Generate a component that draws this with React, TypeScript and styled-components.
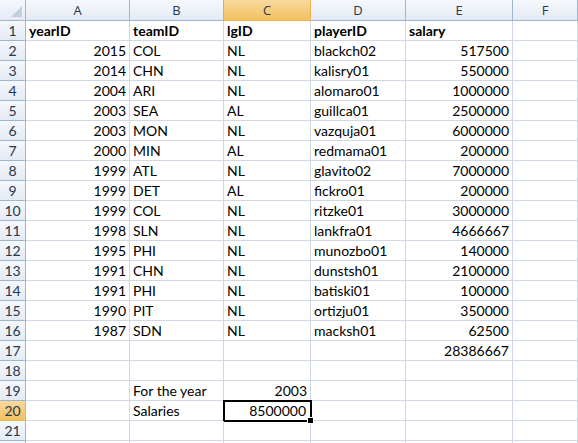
import React from "react";
import styled, { createGlobalStyle, css } from "styled-components";

const Global = createGlobalStyle`
  html, body { margin: 0; padding: 0; background: #fff; overflow: hidden; }
  body { font-family: Lato, "Open Sans", sans-serif; }
`;

const Sheet = styled.div`
  display: grid;
  grid-template-columns: 26px 104px 94px 87px 95px 107px 65px;
  grid-template-rows: 21px;
  grid-auto-rows: 20px;
  width: 578px;
  height: 443px;
  overflow: hidden;
  font-family: Lato, "Open Sans", sans-serif;
  font-size: 14px;
  color: #000;
`;

const headerBg = css<{ $active?: boolean }>`
  background: ${(p) =>
    p.$active
      ? "linear-gradient(#f9d99f, #f1c15f)"
      : "linear-gradient(#f5f8fc, #e4eaf4)"};
  color: #27364a;
  border-right: 1px solid ${(p) => (p.$active ? "#f2b24f" : "#9eb6ce")};
  border-bottom: 1px solid ${(p) => (p.$active ? "#f2b24f" : "#9eb6ce")};
  box-sizing: border-box;
`;

const Corner = styled.div`
  ${headerBg};
  position: relative;
  &::after {
    content: "";
    position: absolute;
    right: 3px;
    bottom: 3px;
    width: 0;
    height: 0;
    border-left: 11px solid transparent;
    border-bottom: 11px solid #c2cfe0;
  }
`;

const ColHead = styled.div<{ $active?: boolean }>`
  ${headerBg};
  display: flex;
  align-items: center;
  justify-content: center;
  font-family: "Open Sans", sans-serif;
  font-size: 13px;
`;

const RowHead = styled.div<{ $active?: boolean }>`
  ${headerBg};
  display: flex;
  align-items: center;
  justify-content: center;
  font-size: 14px;
`;

const Cell = styled.div<{ $right?: boolean; $bold?: boolean; $selected?: boolean }>`
  box-sizing: border-box;
  border-right: 1px solid #d0d7e5;
  border-bottom: 1px solid #d0d7e5;
  display: flex;
  align-items: center;
  justify-content: ${(p) => (p.$right ? "flex-end" : "flex-start")};
  padding: 0 3px 0 3px;
  white-space: nowrap;
  overflow: visible;
  font-weight: ${(p) => (p.$bold ? 700 : 400)};
  position: relative;
  ${(p) =>
    p.$selected &&
    css`
      outline: 2px solid #000;
      outline-offset: -1px;
      padding-right: 4px;
      &::after {
        content: "";
        position: absolute;
        right: -4px;
        bottom: -4px;
        width: 5px;
        height: 5px;
        background: #000;
        border: 1px solid #fff;
        z-index: 2;
      }
    `}
`;

const Overflow = styled.span`
  position: relative;
  z-index: 1;
`;

type Val = string | number | null;

const rows: Val[][] = [
  ["yearID", "teamID", "lgID", "playerID", "salary", null],
  [2015, "COL", "NL", "blackch02", 517500, null],
  [2014, "CHN", "NL", "kalisry01", 550000, null],
  [2004, "ARI", "NL", "alomaro01", 1000000, null],
  [2003, "SEA", "AL", "guillca01", 2500000, null],
  [2003, "MON", "NL", "vazquja01", 6000000, null],
  [2000, "MIN", "AL", "redmama01", 200000, null],
  [1999, "ATL", "NL", "glavito02", 7000000, null],
  [1999, "DET", "AL", "fickro01", 200000, null],
  [1999, "COL", "NL", "ritzke01", 3000000, null],
  [1998, "SLN", "NL", "lankfra01", 4666667, null],
  [1995, "PHI", "NL", "munozbo01", 140000, null],
  [1991, "CHN", "NL", "dunstsh01", 2100000, null],
  [1991, "PHI", "NL", "batiski01", 100000, null],
  [1990, "PIT", "NL", "ortizju01", 350000, null],
  [1987, "SDN", "NL", "macksh01", 62500, null],
  [null, null, null, null, 28386667, null],
  [null, null, null, null, null, null],
  [null, "For the year", 2003, null, null, null],
  [null, "Salaries", 8500000, null, null, null],
  [null, null, null, null, null, null],
  [null, null, null, null, null, null],
];

const cols = ["A", "B", "C", "D", "E", "F"];

export default function App() {
  return (
    <>
      <Global />
      <Sheet>
        <Corner />
        {cols.map((c) => (
          <ColHead key={c} $active={c === "C"}>
            {c}
          </ColHead>
        ))}
        {rows.map((r, ri) => (
          <React.Fragment key={ri}>
            <RowHead $active={ri + 1 === 20}>{ri + 1 <= 21 ? ri + 1 : ""}</RowHead>
            {r.map((v, ci) => (
              <Cell
                key={ci}
                $right={typeof v === "number"}
                $bold={ri === 0}
                $selected={ri + 1 === 20 && ci === 2}
              >
                {v !== null && <Overflow>{v}</Overflow>}
              </Cell>
            ))}
          </React.Fragment>
        ))}
      </Sheet>
    </>
  );
}
